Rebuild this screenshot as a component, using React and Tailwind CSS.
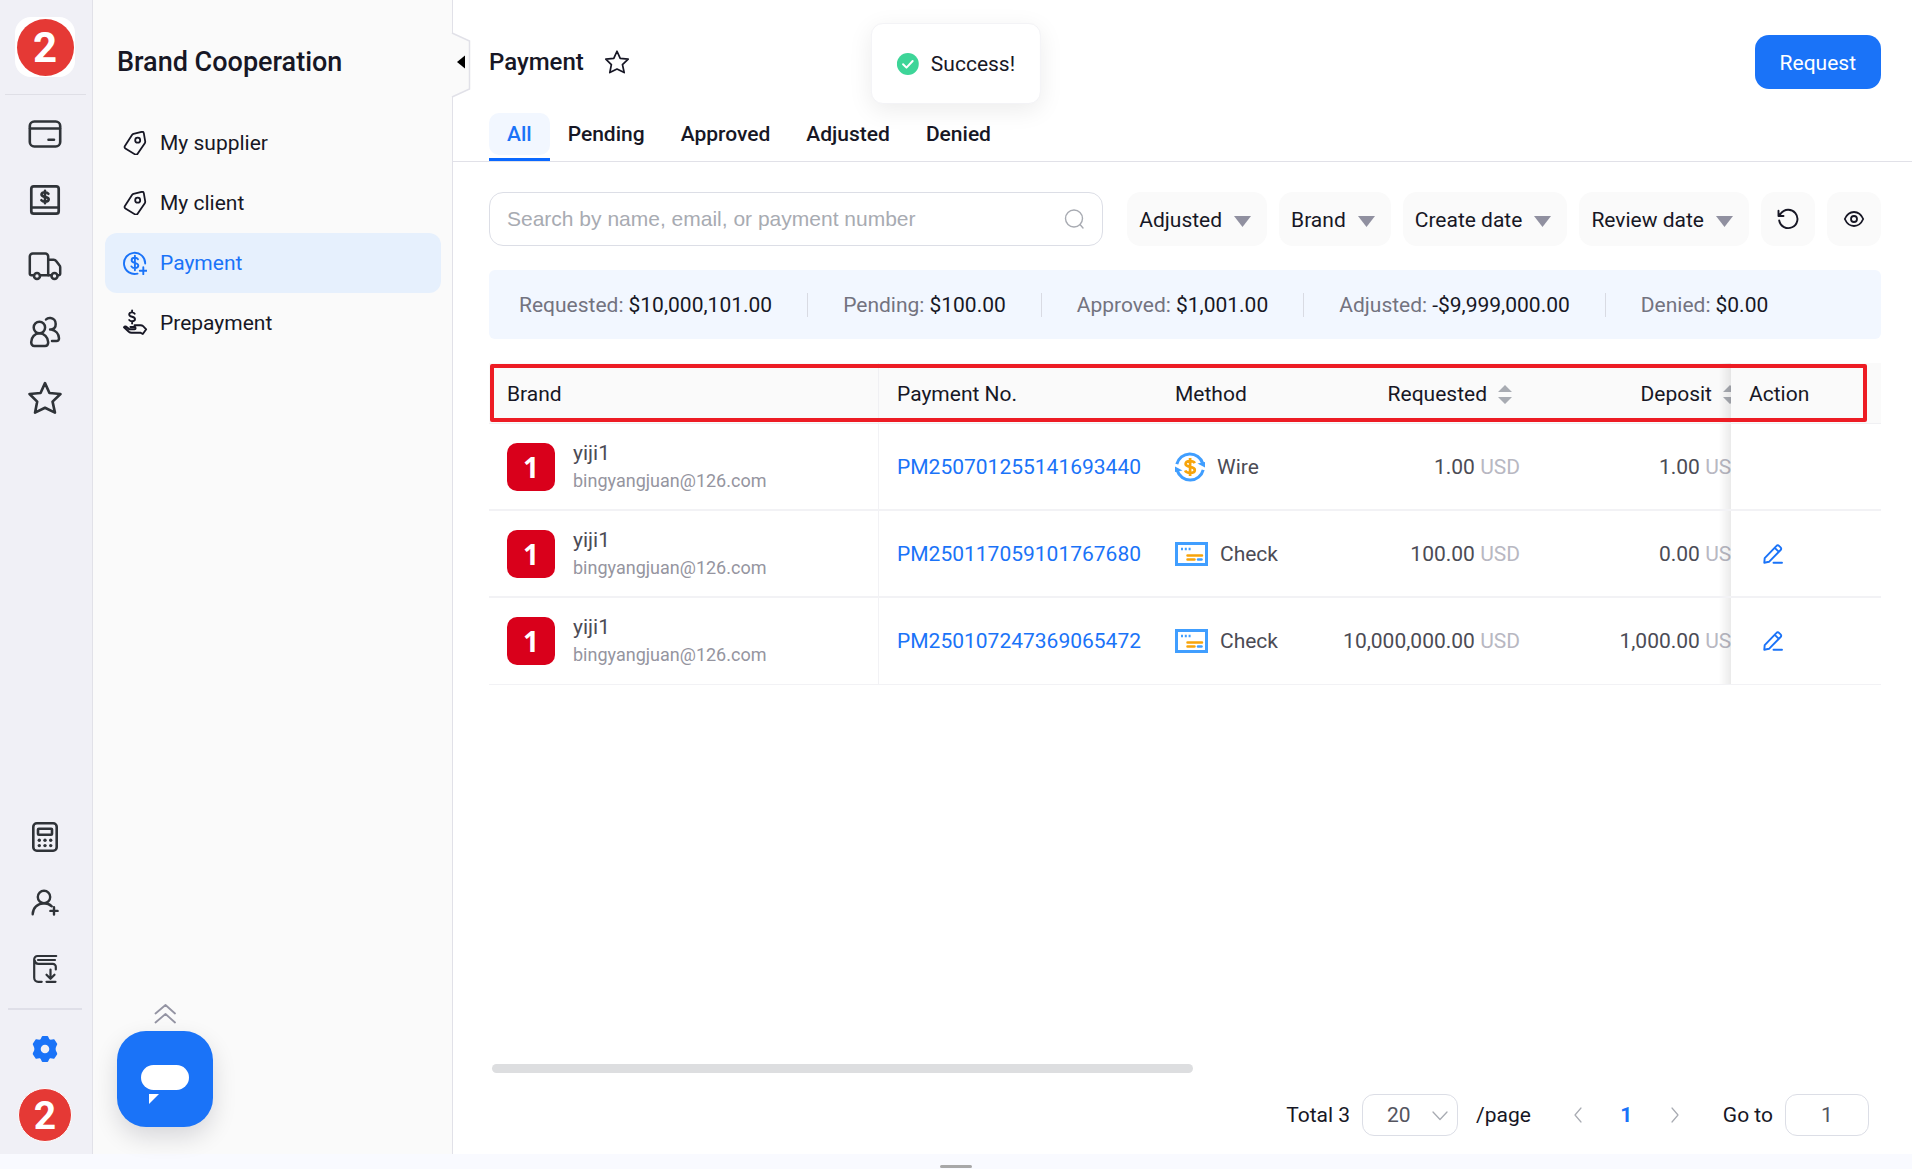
import React from "react";

function Icon({ className, viewBox = "0 0 30 30", children, width = 2 }) {
  return (
    <svg
      className={className}
      viewBox={viewBox}
      fill="none"
      stroke="currentColor"
      strokeWidth={width}
      strokeLinecap="round"
      strokeLinejoin="round"
      aria-hidden="true"
    >
      {children}
    </svg>
  );
}

const STAR = "M15 2.6l3.7 8.2 9.2.9-6.6 6.3 2 9.2-8.3-4.1-8.3 4.1 1.8-9.2-6.4-6.3 9.2-.9z";

function CardIcon() {
  return (
    <Icon className="size-9" viewBox="0 0 36 36" width={2.6}>
      <rect x="2.8" y="5.5" width="30.4" height="25" rx="4.5" />
      <path d="M3 12.5h30M21.5 23.7H27" />
    </Icon>
  );
}

function BillingIcon() {
  return (
    <Icon className="size-9" viewBox="0 0 36 36" width={2.7}>
      <rect x="4.3" y="4.3" width="27.400" height="27.400" rx="2.500" />
      <path d="M4.500 25.500h27" />
      <path
        strokeWidth={2.6}
        d="M21.400 11.800c-.8-1-2-1.500-3.500-1.500-2.100 0-3.400.9-3.400 2.300 0 3.400 7.200 1.500 7.200 4.700 0 1.500-1.400 2.400-3.600 2.400-1.600 0-2.900-.5-3.700-1.500M18 8.800v12.400"
      />
    </Icon>
  );
}

function TruckIcon() {
  return (
    <Icon className="size-9" viewBox="0 0 36 36" width={2.5}>
      <path d="M7 27.300H4.300a1.500 1.500 0 0 1-1.500-1.500V8.500A3 3 0 0 1 5.800 5.500h12.400a3 3 0 0 1 3 3v18.800h-8.300" />
      <path d="M21.500 11.700h5.300a2.600 2.600 0 0 1 2.100 1.100l3.500 4.500c.5.600.8 1.300.8 2v6.400a1.600 1.600 0 0 1-1.600 1.600h-.9M24.500 27.300h-3" />
      <circle cx="10" cy="28" r="3" />
      <circle cx="27.500" cy="28" r="3" />
    </Icon>
  );
}

function UsersIcon() {
  return (
    <Icon className="size-9" viewBox="0 0 36 36" width={2.5}>
      <circle cx="12.400" cy="13.500" r="5.700" />
      <path d="M4.200 28.200c0-5 3.700-9 8.200-9s8.800 4 8.800 9c0 2.200-1.200 3.800-3.200 3.800H7.400c-2 0-3.200-1.600-3.200-3.800z" />
      <path d="M19 5.500c1-1.100 2.700-1.700 4.500-1.500 3.100.3 5.200 2.900 5.200 5.900 0 2.700-1.700 5-4.400 5.600h-1.200M24.300 15.600c4.400.8 7.500 4.500 7.700 8.700.1 1.700-1 2.700-2.500 2.700H25" />
    </Icon>
  );
}

function StarRailIcon() {
  return (
    <Icon className="size-9" viewBox="0 0 30 30" width={2.2}>
      <path d={STAR} />
    </Icon>
  );
}

function CalculatorIcon() {
  return (
    <Icon className="size-9" viewBox="0 0 36 36" width={2.6}>
      <rect x="6.300" y="4.300" width="23.400" height="27.400" rx="3.500" />
      <rect x="11" y="9.800" width="14" height="6" rx="0.800" />
      {[12.3, 18, 23.7].map((x) => (
        <g key={x} fill="currentColor" stroke="none">
          <circle cx={x} cy="21.300" r="1.700" />
          <circle cx={x} cy="26.600" r="1.700" />
        </g>
      ))}
    </Icon>
  );
}

function UserPlusIcon() {
  return (
    <Icon className="size-9" viewBox="0 0 36 36" width={2.4}>
      <circle cx="17" cy="12" r="6.200" />
      <path d="M5.700 29.300c0-6.200 5-11 11.300-11 3 0 5.700 1.100 7.800 3M27 22.300v7.200M23.400 25.900h7.200" />
    </Icon>
  );
}

function BookDownIcon() {
  return (
    <Icon className="size-9" viewBox="0 0 36 36" width={2.2}>
      <path d="M29.200 5H10.500a3.300 3.300 0 0 0-3.300 3.300v18.500a4 4 0 0 0 4 4h3.500M28 9H11M7.700 9.500c.3 2 1.700 3.300 3.600 3.300h14.500a3 3 0 0 1 3 3v2.600M23.500 18.500v8.500M19.500 23.700l4 4.100 4-4.100M19.500 30.800h9" />
    </Icon>
  );
}

function GearIcon() {
  return (
    <svg className="size-9" viewBox="0 0 36 36" aria-hidden="true">
      <path
        fill="#1a73f8"
        fillRule="evenodd"
        d="M15.500 5h5c.9 0 1.300 2.900 2.300 3.500s4-.8 4.600 0l2.800 4.300c.5.800-1.600 3-1.600 5.200s2.100 4.400 1.600 5.200l-2.800 4.300c-.6.800-3.600-.6-4.600 0S21.400 31 20.500 31h-5c-.9 0-1.300-2.900-2.300-3.500s-4 .8-4.600 0l-2.800-4.300c-.5-.8 1.600-3 1.600-5.200s-2.100-4.400-1.600-5.200l2.800-4.300c.6-.8 3.600.6 4.600 0S14.600 5 15.500 5zM18 13.700a4.300 4.300 0 1 0 0 8.600 4.300 4.300 0 0 0 0-8.600z"
      />
    </svg>
  );
}

function TagIcon() {
  return (
    <Icon className="size-6" viewBox="0 0 24 24" width={1.8}>
      <path d="M10.500 2.800l8.300-2c1-.2 1.800.3 2 1.300l1.400 8.200c.1.700 0 1.300-.4 1.900l-7.200 10.600c-.6.900-1.600 1.100-2.500.6L2.400 17.400c-.9-.5-1.100-1.500-.5-2.400L9 4c.4-.6.900-1 1.500-1.200z" />
      <circle cx="14.700" cy="9.200" r="2.500" />
    </Icon>
  );
}

function PaymentIcon() {
  return (
    <Icon className="size-6" viewBox="0 0 24 24" width={1.9}>
      <path d="M22.200 12.600A10.600 10.600 0 1 0 14.500 22.600M20.300 16.200v7M16.800 19.700h7" />
      <path d="M15 8.300c-.6-1-1.700-1.500-3.200-1.500-1.900 0-3.200.9-3.200 2.400 0 3.500 6.700 1.900 6.700 5.400 0 1.600-1.400 2.500-3.400 2.500-1.600 0-2.900-.6-3.500-1.700M11.900 4.600v14.600" />
    </Icon>
  );
}

function PrepaymentIcon() {
  return (
    <Icon className="size-6 overflow-visible" viewBox="0 0 24 24" width={1.9}>
      <path d="M11.700 2.700c-.6-.9-1.500-1.300-2.700-1.300-1.700 0-2.800.8-2.800 2 0 3 5.800 1.700 5.800 4.700 0 1.400-1.100 2.200-2.900 2.200-1.200 0-2.200-.4-2.900-1.300M9.100-.6v2M9.100 10.300v2.300" />
      <path d="M1 16.200c.8-1.200 2-.9 3 .1l2.300 2h5.200c1.500 0 1.500-2.300 0-2.300H7.400M11.500 14.200h6c1 0 1.800.2 2.600 1l3.100 3.100-3.400 4.700-2.500-1.300H8.600c-1 0-2-.3-2.800-1L1 16.200" />
    </Icon>
  );
}

function WireIcon() {
  return (
    <svg className="size-[30px]" viewBox="0 0 30 30" fill="none" aria-hidden="true">
      <path d="M1.800 12.200A13.500 13.500 0 0 1 27.800 11.500M28.200 17.800A13.500 13.500 0 0 1 2.200 18.500" stroke="#409eff" strokeWidth="3" />
      <path d="M30 10v5.500l-7.500-4zM0 20v-5.500l7.500 4z" fill="#409eff" />
      <path d="M19.800 11.200c-.8-1.400-2.400-2-4.600-2-2.800 0-4.600 1.100-4.600 2.900 0 3.900 9.200 1.700 9.200 5.800 0 1.900-1.900 3-4.700 3-2.400 0-4.200-.8-5-2.400M15.100 6v18" stroke="#f7a40a" strokeWidth="2.700" />
    </svg>
  );
}

function CheckIcon() {
  return (
    <svg className="h-6 w-[33px]" viewBox="0 0 33 24" fill="none" aria-hidden="true">
      <rect x="1.500" y="1.500" width="30" height="21" stroke="#409eff" strokeWidth="3" />
      <path d="M6 7h2M9.800 7h2M13.600 7h2" stroke="#409eff" strokeWidth="2.600" />
      <path d="M12.500 13.600H27M12.500 17.600h7" stroke="#f7a40a" strokeWidth="2.500" strokeLinecap="round" />
      <path d="M23 17.600h3.500" stroke="#409eff" strokeWidth="2.500" strokeLinecap="round" />
    </svg>
  );
}

function EditIcon() {
  return (
    <Icon className="size-5" viewBox="0 0 20 20" width={1.9}>
      <path d="M1.300 18.700l.4-4.600L13.500 1.900c.7-.8 1.800-.8 2.500-.1l1.600 1.600c.7.700.7 1.800 0 2.600L6 17.800zM11.800 3.800l4 4M10.500 18.700h8.500" />
    </Icon>
  );
}

function Sorter() {
  return (
    <svg className="h-[19px] w-[14px] shrink-0" viewBox="0 0 14 19" fill="#a8abb2" aria-hidden="true">
      <path d="M7 0l7 7H0zM7 19l7-7H0z" />
    </svg>
  );
}

function RailButton({ label, children }) {
  return (
    <button type="button" aria-label={label} className="flex h-[66px] w-full items-center justify-center text-[#2f3338]">
      {children}
    </button>
  );
}

function Rail() {
  return (
    <aside className="flex w-[93px] shrink-0 flex-col items-center border-r border-[#e1e1e8] bg-[#f0f0f6] pr-[2px]">
      <div className="flex h-[94px] shrink-0 items-center justify-center">
        <div className="flex size-[60px] items-center justify-center rounded-2xl bg-white">
          <div className="flex size-[57px] items-center justify-center rounded-full bg-[#e53935] pt-0.5 text-[42px] leading-none font-bold text-white">2</div>
        </div>
      </div>
      <div className="h-px w-[81px] shrink-0 bg-[#dfdfe6]" />
      <nav aria-label="Modules" className="mt-1.5 w-full">
        <RailButton label="Cards"><CardIcon /></RailButton>
        <RailButton label="Billing"><BillingIcon /></RailButton>
        <RailButton label="Shipping"><TruckIcon /></RailButton>
        <RailButton label="Contacts"><UsersIcon /></RailButton>
        <RailButton label="Favorites"><StarRailIcon /></RailButton>
      </nav>
      <div className="mt-auto w-full">
        <RailButton label="Calculator"><CalculatorIcon /></RailButton>
        <RailButton label="Invite user"><UserPlusIcon /></RailButton>
        <RailButton label="Downloads"><BookDownIcon /></RailButton>
      </div>
      <div className="mt-1.5 h-0.5 w-[74px] shrink-0 bg-[#dfdfe8]" />
      <button type="button" aria-label="Settings" className="flex h-[78px] shrink-0 items-center justify-center">
        <GearIcon />
      </button>
      <button type="button" aria-label="Account" className="mb-3 flex size-[54px] shrink-0 items-center justify-center rounded-full border border-white bg-[#e53935] pt-0.5 text-[39px] leading-none font-bold text-white">
        2
      </button>
    </aside>
  );
}

const MENU = [
  { label: "My supplier", icon: TagIcon },
  { label: "My client", icon: TagIcon },
  { label: "Payment", icon: PaymentIcon, active: true },
  { label: "Prepayment", icon: PrepaymentIcon },
];

function Sidebar() {
  return (
    <aside className="relative flex w-[360px] shrink-0 flex-col border-r border-[#e1e1e8] bg-[#fafafa] pl-3 pr-[11px]">
      <h2 className="mt-11 pl-3 text-[27px] leading-9 font-medium">Brand Cooperation</h2>
      <nav aria-label="Brand Cooperation" className="mt-[33px]">
        {MENU.map(({ label, icon: Glyph, active }) => (
          <a
            key={label}
            href="#"
            aria-current={active ? "page" : undefined}
            className={
              active
                ? "flex h-[60px] items-center gap-[13px] rounded-xl bg-[#e6f0fd] pl-[18px] text-[#1a73f8]"
                : "flex h-[60px] items-center gap-[13px] rounded-xl pl-[18px]"
            }
          >
            <Glyph />
            {label}
          </a>
        ))}
      </nav>
      <div className="mt-auto mb-[27px] ml-3 flex w-24 flex-col items-center gap-1.5 self-start">
        <button type="button" aria-label="Expand shortcuts" className="text-[#9494a3]">
          <Icon className="h-[22px] w-6" viewBox="0 0 24 22" width={1.8}>
            <path d="M2.500 10.500L12.500 2l9.500 8.500M2.500 19.500L12.500 11l9.500 8.500" />
          </Icon>
        </button>
        <button type="button" aria-label="Open chat" className="flex size-24 items-center justify-center rounded-[29px] bg-[#1a73f8] shadow-[0_10px_24px_rgba(0,0,30,0.14)]">
          <svg className="h-[50px] w-12" viewBox="0 0 48 50" fill="#fff" aria-hidden="true">
            <rect y="11" width="48" height="25" rx="12.500" />
            <path d="M8 40h10L8 50z" />
          </svg>
        </button>
      </div>
      <button type="button" aria-label="Collapse menu" className="absolute top-8 -right-[19px] z-10">
        <svg className="h-[66px] w-5" viewBox="0 0 20 66" aria-hidden="true">
          <path d="M1 1l17.500 8v48L1 65" fill="#fafafa" stroke="#e1e1e8" strokeWidth="1.500" />
          <path d="M6 30l8-6.500v13z" fill="#000" />
        </svg>
      </button>
    </aside>
  );
}

const TABS = ["All", "Pending", "Approved", "Adjusted", "Denied"];
const FILTERS = ["Adjusted", "Brand", "Create date", "Review date"];
const TOTALS = [
  ["Requested", "$10,000,101.00"],
  ["Pending", "$100.00"],
  ["Approved", "$1,001.00"],
  ["Adjusted", "-$9,999,000.00"],
  ["Denied", "$0.00"],
];
const ROWS = [
  { no: "PM250701255141693440", method: "Wire", requested: "1.00", deposit: "1.00", editable: false },
  { no: "PM250117059101767680", method: "Check", requested: "100.00", deposit: "0.00", editable: true },
  { no: "PM250107247369065472", method: "Check", requested: "10,000,000.00", deposit: "1,000.00", editable: true },
];

function Toolbar() {
  return (
    <div className="mt-[30px] flex gap-3">
      <label className="mr-3 flex h-[54px] min-w-0 flex-1 items-center rounded-[14px] border border-[#dcdee6] px-[17px]">
        <input
          type="search"
          aria-label="Search payments"
          placeholder="Search by name, email, or payment number"
          className="min-w-0 flex-1 bg-transparent font-['Liberation_Sans',sans-serif] outline-none placeholder:text-[#a8abb2]"
        />
        <Icon className="size-[22px] text-[#a8abb2]" viewBox="0 0 22 22" width={1.4}>
          <circle cx="11" cy="10.500" r="8.500" />
          <path d="M17 16.500l3 3.500" />
        </Icon>
      </label>
      {FILTERS.map((name) => (
        <button key={name} type="button" className="flex h-[54px] items-center gap-3 rounded-[14px] bg-[#fafafa] pt-0.5 pr-4 pl-3 whitespace-nowrap">
          {name}
          <svg className="mt-0.5 h-[11px] w-[17px]" viewBox="0 0 17 11" fill="#9090a0" aria-hidden="true">
            <path d="M0 0h17L8.500 11z" />
          </svg>
        </button>
      ))}
      <button type="button" aria-label="Reset filters" className="flex size-[54px] items-center justify-center rounded-[14px] bg-[#fafafa]">
        <Icon className="size-6" viewBox="0 0 24 24" width={1.9}>
          <path d="M3.200 13.500A9.200 9.200 0 1 0 4.800 6.500L2.500 9M2.500 3.800V9h5" />
        </Icon>
      </button>
      <button type="button" aria-label="Visible columns" className="flex size-[54px] items-center justify-center rounded-[14px] bg-[#fafafa]">
        <Icon className="size-[22px]" viewBox="0 0 22 22" width={1.8}>
          <path d="M1.800 11c1.900-4.300 5.200-7 9.200-7s7.300 2.700 9.200 7c-1.900 4.300-5.200 7-9.200 7s-7.300-2.700-9.200-7z" />
          <circle cx="11" cy="11" r="3" />
        </Icon>
      </button>
    </div>
  );
}

const PIN = "sticky right-0 before:absolute before:inset-y-0 before:-left-3 before:w-3 before:bg-gradient-to-r before:from-transparent before:to-black/8 before:content-['']";

function Amount({ value }) {
  return (
    <>
      {value} <span className="text-[#b8b8c2]">USD</span>
    </>
  );
}

function PaymentTable() {
  return (
    <div className="relative mt-6">
      <div className="overflow-hidden">
        <table className="w-full min-w-[1424px] table-fixed border-separate border-spacing-0 text-left">
          <colgroup>
            <col />
            <col className="w-[278px]" />
            <col className="w-[156px]" />
            <col className="w-[225px]" />
            <col className="w-[225px]" />
            <col className="w-[150px]" />
          </colgroup>
          <thead>
            <tr className="h-[61px] *:border-b *:border-[#f0f0f3] *:bg-[#fafafa] *:px-[18px] *:pt-0.5 *:font-normal">
              <th className="border-r">Brand</th>
              <th>Payment No.</th>
              <th>Method</th>
              <th aria-sort="none">
                <button type="button" className="ml-auto flex items-center gap-[11px] pr-2">Requested <Sorter /></button>
              </th>
              <th aria-sort="none">
                <button type="button" className="ml-auto flex items-center gap-[11px] pr-2">Deposit <Sorter /></button>
              </th>
              <th className={PIN}>Action</th>
            </tr>
          </thead>
          <tbody className="text-[#4b4b55]">
            {ROWS.map((row) => (
              <tr key={row.no} className="h-[87px] *:border-b-2 *:border-[#f2f2f5] *:px-[18px] last:*:border-b">
                <td className="border-r">
                  <div className="flex items-center gap-[18px]">
                    <div className="flex size-12 items-center justify-center rounded-[10px] bg-[#d9001b] font-['Open_Sans',sans-serif] text-[28px] leading-none font-bold text-white">1</div>
                    <div>
                      <div className="leading-7">yiji1</div>
                      <div className="text-lg leading-7 text-[#9595a0]">bingyangjuan@126.com</div>
                    </div>
                  </div>
                </td>
                <td><a href="#" className="text-[#1a73f8]">{row.no}</a></td>
                <td>
                  <div className="flex items-center gap-3">
                    {row.method === "Wire" ? <WireIcon /> : <CheckIcon />}
                    {row.method}
                  </div>
                </td>
                <td className="text-right whitespace-nowrap"><Amount value={row.requested} /></td>
                <td className="text-right whitespace-nowrap"><Amount value={row.deposit} /></td>
                <td className={PIN + " bg-white"}>
                  {row.editable && (
                    <button type="button" aria-label={"Edit " + row.no} className="ml-3.5 flex text-[#1a73f8]">
                      <EditIcon />
                    </button>
                  )}
                </td>
              </tr>
            ))}
          </tbody>
        </table>
      </div>
      <div className="pointer-events-none absolute top-px right-3.5 left-px h-[58px] rounded-xs border-4 border-[#ed1c24]" />
    </div>
  );
}

function Pagination() {
  return (
    <div className="mt-[21px] mr-3 mb-[18px] flex h-[42px] items-center justify-end">
      <span className="mr-3">Total 3</span>
      <div className="relative">
        <select aria-label="Rows per page" defaultValue="20" className="h-[42px] w-24 appearance-none rounded-xl border border-[#dcdee6] pl-6 text-[#55555f]">
          <option>20</option>
          <option>50</option>
        </select>
        <Icon className="pointer-events-none absolute top-4 right-2.5 h-3 w-4 text-[#a8abb2]" viewBox="0 0 16 12" width={1.3}>
          <path d="M1 2l7 7.500L15 2" />
        </Icon>
      </div>
      <span className="ml-[18px]">/page</span>
      <button type="button" aria-label="Previous page" className="ml-[41px] text-[#a8abb2]">
        <Icon className="h-4 w-3" viewBox="0 0 12 16" width={1.2}>
          <path d="M9 1L3 8l6 7" />
        </Icon>
      </button>
      <button type="button" aria-current="page" className="w-[85px] font-bold text-[#1a73f8]">1</button>
      <button type="button" aria-label="Next page" className="text-[#a8abb2]">
        <Icon className="h-4 w-3" viewBox="0 0 12 16" width={1.2}>
          <path d="M3 1l6 7-6 7" />
        </Icon>
      </button>
      <label className="ml-[42px] flex items-center gap-3">
        Go to
        <input type="text" defaultValue="1" className="h-[42px] w-[84px] rounded-xl border border-[#dcdee6] text-center text-[#55555f]" />
      </label>
    </div>
  );
}

function Toast() {
  return (
    <div role="status" className="absolute top-[23px] left-1/2 z-20 flex h-[81px] -translate-x-1/2 items-center gap-3 rounded-xl border border-[#f3f3f6] bg-white px-[25px] pt-px shadow-[0_6px_24px_rgba(0,0,0,0.08)]">
      <svg className="size-[22px]" viewBox="0 0 22 22" fill="none" aria-hidden="true">
        <circle cx="11" cy="11" r="11" fill="#3dd598" />
        <path d="M6.200 11.200l3.400 3.400 6.200-6.600" stroke="#fff" strokeWidth="2" strokeLinecap="round" strokeLinejoin="round" />
      </svg>
      Success!
    </div>
  );
}

export default function App() {
  return (
    <div className="relative flex h-screen flex-col bg-white font-[Roboto,sans-serif] text-[21px] leading-7 text-[#171725]">
      <div className="flex min-h-0 flex-1">
        <Rail />
        <Sidebar />
        <main className="flex min-w-0 flex-1 flex-col">
          <header className="flex h-[113px] shrink-0 items-start pt-[35px] pr-[31px] pl-9">
            <h1 className="flex h-[54px] items-center text-2xl font-medium">Payment</h1>
            <button type="button" aria-label="Add to favorites" className="ml-5 flex h-[54px] items-center">
              <Icon className="size-[26px]" viewBox="0 0 30 30" width={2}>
                <path d={STAR} />
              </Icon>
            </button>
            <button type="button" className="ml-auto h-[54px] rounded-[14px] bg-[#1a73f8] px-[25px] pt-0.5 text-white">Request</button>
          </header>
          <div role="tablist" className="flex shrink-0 border-b border-[#e1e1e8] pl-9">
            {TABS.map((tab, i) => (
              <div key={tab} className={i === 0 ? "border-b-3 border-[#0a68ff] pb-[3px]" : "pb-1.5"}>
                <button
                  type="button"
                  role="tab"
                  aria-selected={i === 0}
                  className={
                    i === 0
                      ? "h-[42px] rounded-[10px] bg-[#f2f7ff] px-[18px] font-medium text-[#1a73f8]"
                      : "h-[42px] px-[18px] font-medium"
                  }
                >
                  {tab}
                </button>
              </div>
            ))}
          </div>
          <div className="flex min-h-0 flex-1 flex-col pr-[31px] pl-9">
            <Toolbar />
            <dl className="mt-6 flex h-[69px] shrink-0 items-center rounded-md bg-[#f2f7ff] pl-[30px] whitespace-nowrap">
              {TOTALS.map(([name, value], i) => (
                <React.Fragment key={name}>
                  {i > 0 && <div className="mx-[35px] h-6 w-px bg-[#d9dbe3]" />}
                  <div className="flex gap-[5px]">
                    <dt className="text-[#73737f]">{name}:</dt>
                    <dd>{value}</dd>
                  </div>
                </React.Fragment>
              ))}
            </dl>
            <PaymentTable />
            <div className="mt-auto ml-[3px] h-[9px] w-[701px] max-w-full shrink-0 rounded-full bg-[#dddee0]" />
            <Pagination />
          </div>
        </main>
      </div>
      <div className="flex h-[15px] shrink-0 items-end justify-center bg-[#f9faff] pb-px">
        <div className="h-[3px] w-8 rounded-full bg-[#a8a8a8]" />
      </div>
      <Toast />
    </div>
  );
}
